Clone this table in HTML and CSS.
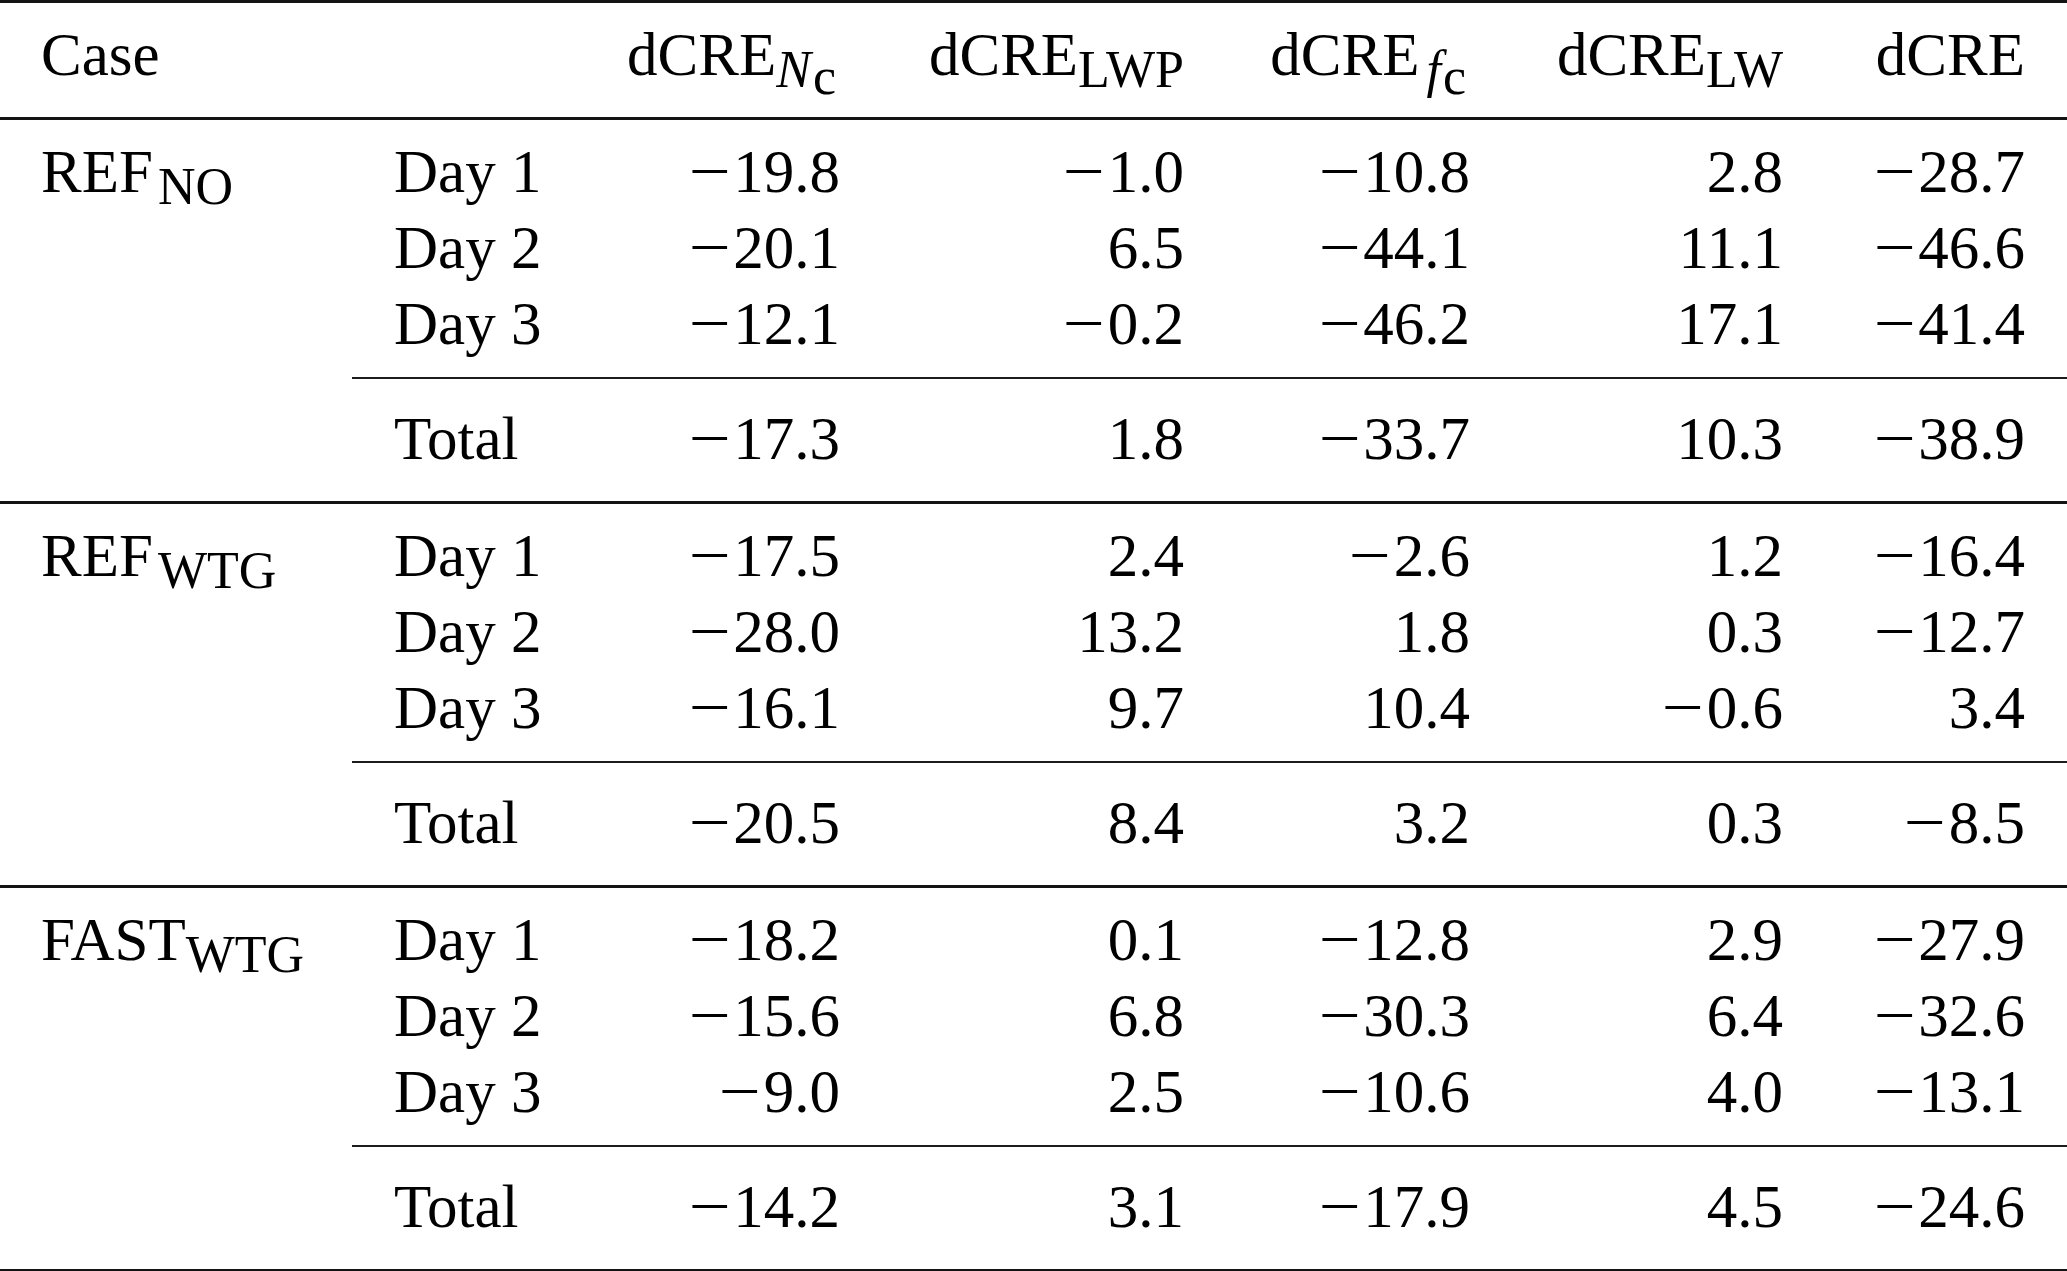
FILE: index.html
```html
<!DOCTYPE html>
<html lang="en">
<head>
<meta charset="utf-8">
<title>dCRE decomposition</title>
<link rel="stylesheet" href="styles.css">
</head>
<body>
<table class="tbl">
  <colgroup>
    <col class="w-case"><col class="w-day"><col class="w-n1"><col class="w-n2"><col class="w-n3"><col class="w-n4"><col class="w-n5">
  </colgroup>
  <thead>
    <tr class="hdr">
      <th class="txt">Case</th>
      <th class="txt"></th>
      <th class="num">dCRE<span class="sb"><span class="it">N</span><span class="sb2">c</span></span></th>
      <th class="num">dCRE<span class="sb">LWP</span></th>
      <th class="num">dCRE<span class="sb fgap"><span class="it">f</span><span class="sb2">c</span></span></th>
      <th class="num">dCRE<span class="sb">LW</span></th>
      <th class="num">dCRE</th>
    </tr>
  </thead>
  <tbody>
    <tr class="first"><td class="txt">REF<span class="sb gap">NO</span></td><td class="txt">Day 1</td><td class="num"><span class="mn">−</span>19.8</td><td class="num"><span class="mn">−</span>1.0</td><td class="num"><span class="mn">−</span>10.8</td><td class="num">2.8</td><td class="num"><span class="mn">−</span>28.7</td></tr>
    <tr><td class="txt"></td><td class="txt">Day 2</td><td class="num"><span class="mn">−</span>20.1</td><td class="num">6.5</td><td class="num"><span class="mn">−</span>44.1</td><td class="num">11.1</td><td class="num"><span class="mn">−</span>46.6</td></tr>
    <tr class="last"><td class="txt"></td><td class="txt">Day 3</td><td class="num"><span class="mn">−</span>12.1</td><td class="num"><span class="mn">−</span>0.2</td><td class="num"><span class="mn">−</span>46.2</td><td class="num">17.1</td><td class="num"><span class="mn">−</span>41.4</td></tr>
    <tr class="tot"><td class="txt"></td><td class="txt">Total</td><td class="num"><span class="mn">−</span>17.3</td><td class="num">1.8</td><td class="num"><span class="mn">−</span>33.7</td><td class="num">10.3</td><td class="num"><span class="mn">−</span>38.9</td></tr>
  </tbody>
  <tbody>
    <tr class="first"><td class="txt">REF<span class="sb gap">WTG</span></td><td class="txt">Day 1</td><td class="num"><span class="mn">−</span>17.5</td><td class="num">2.4</td><td class="num"><span class="mn">−</span>2.6</td><td class="num">1.2</td><td class="num"><span class="mn">−</span>16.4</td></tr>
    <tr><td class="txt"></td><td class="txt">Day 2</td><td class="num"><span class="mn">−</span>28.0</td><td class="num">13.2</td><td class="num">1.8</td><td class="num">0.3</td><td class="num"><span class="mn">−</span>12.7</td></tr>
    <tr class="last"><td class="txt"></td><td class="txt">Day 3</td><td class="num"><span class="mn">−</span>16.1</td><td class="num">9.7</td><td class="num">10.4</td><td class="num"><span class="mn">−</span>0.6</td><td class="num">3.4</td></tr>
    <tr class="tot"><td class="txt"></td><td class="txt">Total</td><td class="num"><span class="mn">−</span>20.5</td><td class="num">8.4</td><td class="num">3.2</td><td class="num">0.3</td><td class="num"><span class="mn">−</span>8.5</td></tr>
  </tbody>
  <tbody>
    <tr class="first"><td class="txt">FAST<span class="sb">WTG</span></td><td class="txt">Day 1</td><td class="num"><span class="mn">−</span>18.2</td><td class="num">0.1</td><td class="num"><span class="mn">−</span>12.8</td><td class="num">2.9</td><td class="num"><span class="mn">−</span>27.9</td></tr>
    <tr><td class="txt"></td><td class="txt">Day 2</td><td class="num"><span class="mn">−</span>15.6</td><td class="num">6.8</td><td class="num"><span class="mn">−</span>30.3</td><td class="num">6.4</td><td class="num"><span class="mn">−</span>32.6</td></tr>
    <tr class="last"><td class="txt"></td><td class="txt">Day 3</td><td class="num"><span class="mn">−</span>9.0</td><td class="num">2.5</td><td class="num"><span class="mn">−</span>10.6</td><td class="num">4.0</td><td class="num"><span class="mn">−</span>13.1</td></tr>
    <tr class="tot"><td class="txt"></td><td class="txt">Total</td><td class="num"><span class="mn">−</span>14.2</td><td class="num">3.1</td><td class="num"><span class="mn">−</span>17.9</td><td class="num">4.5</td><td class="num"><span class="mn">−</span>24.6</td></tr>
  </tbody>
</table>
</body>
</html>
```
FILE: styles.css
```css
html, body {
  margin: 0;
  padding: 0;
  background: #ffffff;
  overflow: hidden;
}

body {
  font-family: "Liberation Serif", "Times New Roman", serif;
  font-size: 61px;
  color: #000000;
}

.tbl {
  width: 2067px;
  table-layout: fixed;
  border-collapse: separate;
  border-spacing: 0;
}

.w-case { width: 352px; }
.w-day  { width: 232px; }
.w-n1   { width: 298px; }
.w-n2   { width: 344px; }
.w-n3   { width: 286px; }
.w-n4   { width: 313px; }
.w-n5   { width: 242px; }

.tbl th,
.tbl td {
  padding: 0 42px;
  line-height: 76px;
  font-weight: normal;
  white-space: nowrap;
  vertical-align: top;
}

.tbl .txt { text-align: left; }
.tbl .num { text-align: right; }
.tbl tr > :first-child { padding-left: 41px; }

/* header */
.hdr th {
  border-top: 3px solid #141414;
  border-bottom: 3px solid #141414;
  padding-top: 14px;
  padding-bottom: 24px;
}

/* body rows */
.first td { padding-top: 14px; }
.last td { padding-bottom: 15px; }

.tot td {
  border-top: 2px solid #1c1c1c;
  border-bottom: 3px solid #141414;
  padding-top: 22px;
  padding-bottom: 24px;
}
.tot td:first-child { border-top-color: transparent; }

/* subscripts */
.sb {
  position: relative;
  top: 12px;
  font-size: 52px;
  line-height: 1;
}
.sb.gap { margin-left: 5px; }
.sb.fgap { margin-left: 7px; }

.sb2 {
  position: relative;
  top: 7px;
  margin-left: 2px;
  margin-right: 4px;
}

.it { font-style: italic; }

/* wide math minus */
.mn {
  display: inline-block;
  width: 0.78em;
  text-align: center;
  transform: scaleX(1.22);
}
```
